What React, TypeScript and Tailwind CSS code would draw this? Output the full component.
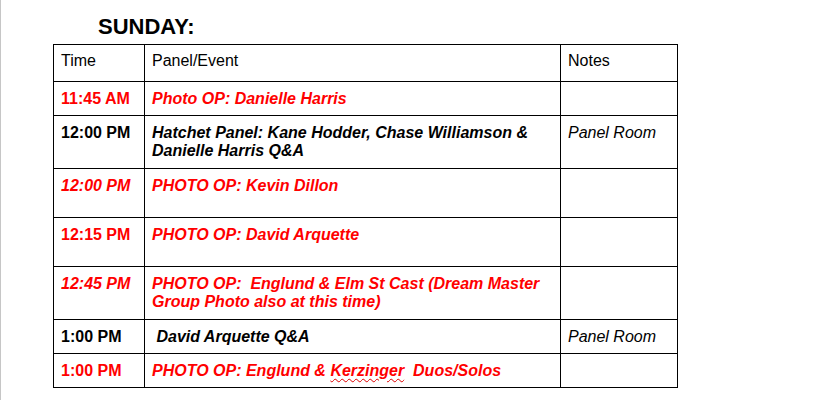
const RED = 'text-[#ff0000]';

type Row = {
  h: string;
  time: React.ReactNode;
  event: React.ReactNode;
  notes?: string;
};

const rows: Row[] = [
  {
    h: 'h-[34px]',
    time: <span className={`font-bold ${RED}`}>11:45 AM</span>,
    event: <span className={`font-bold italic ${RED}`}>Photo OP: Danielle Harris</span>,
  },
  {
    h: 'h-[53px]',
    time: <span className="font-bold">12:00 PM</span>,
    event: (
      <span className="font-bold italic">
        Hatchet Panel: Kane Hodder, Chase Williamson &amp; Danielle Harris Q&amp;A
      </span>
    ),
    notes: 'Panel Room',
  },
  {
    h: 'h-[49px]',
    time: <span className={`font-bold italic ${RED}`}>12:00 PM</span>,
    event: <span className={`font-bold italic ${RED}`}>PHOTO OP: Kevin Dillon</span>,
  },
  {
    h: 'h-[49px]',
    time: <span className={`font-bold ${RED}`}>12:15 PM</span>,
    event: <span className={`font-bold italic ${RED}`}>PHOTO OP: David Arquette</span>,
  },
  {
    h: 'h-[53px]',
    time: <span className={`font-bold italic ${RED}`}>12:45 PM</span>,
    event: (
      <span className={`font-bold italic whitespace-pre-wrap ${RED}`}>
        PHOTO OP:  Englund &amp; Elm St Cast (Dream Master Group Photo also at this time)
      </span>
    ),
  },
  {
    h: 'h-[34px]',
    time: <span className="font-bold">1:00 PM</span>,
    event: <span className="font-bold italic whitespace-pre"> David Arquette Q&amp;A</span>,
    notes: 'Panel Room',
  },
  {
    h: 'h-[34px]',
    time: <span className={`font-bold ${RED}`}>1:00 PM</span>,
    event: (
      <span className={`font-bold italic whitespace-pre ${RED}`}>
        PHOTO OP: Englund &amp;{' '}
        <span className="underline decoration-wavy decoration-[#d00] decoration-[0.5px] underline-offset-[2px]">Kerzinger</span>
        {'  '}Duos/Solos
      </span>
    ),
  },
];

export default function App() {
  return (
    <div
      className="h-[400px] w-[816px] bg-white border-l border-[#c6c6c6] text-black text-[16px] leading-[18.4px]"
      style={{ fontFamily: '"Liberation Sans", Arial, sans-serif' }}
    >
      <h1 className="pl-[97px] pt-[14px] text-[22px] font-bold leading-[25px]">SUNDAY:</h1>

      <table className="ml-[52px] mt-[5px] w-[625px] table-fixed border-collapse">
        <colgroup>
          <col className="w-[91px]" />
          <col className="w-[416px]" />
          <col className="w-[117px]" />
        </colgroup>
        <thead>
          <tr className="h-[37px]">
            <th className="border border-black px-[7px] pt-[7px] align-top text-left font-normal">Time</th>
            <th className="border border-black px-[7px] pt-[7px] align-top text-left font-normal">Panel/Event</th>
            <th className="border border-black px-[7px] pt-[7px] align-top text-left font-normal">Notes</th>
          </tr>
        </thead>
        <tbody>
          {rows.map((r, i) => (
            <tr key={i} className={r.h}>
              <td className="border border-black px-[7px] pt-[8px] align-top">{r.time}</td>
              <td className="border border-black px-[7px] pt-[8px] align-top">{r.event}</td>
              <td className="border border-black px-[7px] pt-[8px] align-top italic">{r.notes}</td>
            </tr>
          ))}
        </tbody>
      </table>
    </div>
  );
}
